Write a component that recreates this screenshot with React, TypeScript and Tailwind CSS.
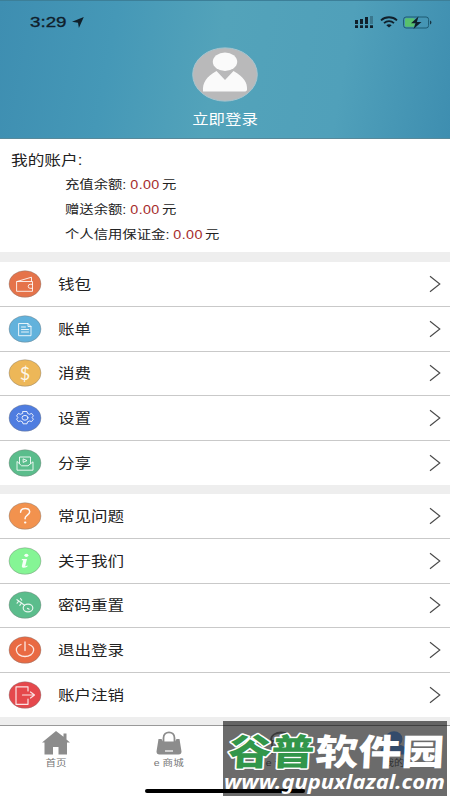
import React from 'react'

const ICON = {
  fill: 'none',
  stroke: 'white',
  strokeWidth: 1,
  strokeOpacity: 0.85,
  strokeLinejoin: 'round' as const,
  strokeLinecap: 'round' as const,
}

// Every icon is drawn on a 34x28 oval badge
const icons: Record<string, React.ReactNode> = {
  wallet: (
    <g {...ICON}>
      <path d="M9 11.500h15.500v9.800H9zM9 11.500l14.500-4.300v4M24.500 14.300h-2.300a2 2 0 0 0 0 4h2.300" />
    </g>
  ),
  bill: (
    <g {...ICON}>
      <path d="M11 8.500h9l3 3v9.200H11zM20 8.500v3h3M13.500 12h4M13.500 14.500h7M13.500 17h7" />
    </g>
  ),
  dollar: (
    <text x="17" y="20.500" textAnchor="middle" fontSize="18" fill="white" fillOpacity="0.9" className="font-['Lato']">$</text>
  ),
  gear: (
    <g {...ICON}>
      <path d="M15 7.500h4l.6 2 2 .8 2-.9 1.800 2.400-1.300 1.700 1.300 1.700-1.800 2.400-2-.6-2 .8-.6 2h-4l-.6-2-2-.8-2 .6-1.800-2.400 1.300-1.700-1.300-1.700 1.800-2.400 2 .9 2-.8z" />
      <ellipse cx="17" cy="13.800" rx="3" ry="2.400" />
    </g>
  ),
  share: (
    <g {...ICON}>
      <path d="M11.500 14.500V8h11v6.500M9 12.800v8.400h16v-8.400l-5 4h-6zM15.500 10l3.500 1.600-3.500 1.600z" />
    </g>
  ),
  question: (
    <g {...ICON} strokeWidth={1.500} strokeOpacity={0.95}>
      <path d="M12.600 10.300c.1-2.500 2-3.900 4.600-3.900 2.700 0 4.500 1.400 4.500 3.400 0 3.200-4.600 3.400-4.600 6.500v.4" />
      <path d="M17 20.400h.4" strokeWidth="2" />
    </g>
  ),
  info: (
    <g fill="white" fillOpacity="0.92">
      <ellipse cx="18.400" cy="8.300" rx="2" ry="1.600" />
      <path d="M14 12h5l-1.800 7.200 2.500-.6-.4 1.200c-2.800 1.600-6 1.400-5.400-1l1.300-5.600H13.600z" />
    </g>
  ),
  key: (
    <g {...ICON} strokeWidth={1.200}>
      <ellipse cx="20" cy="17" rx="4.800" ry="3.900" />
      <path d="M16.500 14.300L9 8.700M10.800 10l-1.700 2.200M13.600 12l-1.800 2.300M12.500 7.500l1.200 1.700" />
      <path d="M19.500 17.400l1.600.8" />
    </g>
  ),
  power: (
    <g {...ICON} strokeWidth={1.300}>
      <path d="M17 6v8.500M13 8.500c-3.500 1.300-5 3.500-4.600 6 .5 3.600 4.200 6 8.600 6s8.100-2.400 8.600-6c.4-2.500-1.100-4.700-4.600-6" />
    </g>
  ),
  logout: (
    <g {...ICON} strokeWidth={1.200}>
      <path d="M20 10V5.800H8v17.500h12V18M14.500 14h11.500M22.500 11l4 3-4 3" />
    </g>
  ),
}

type Item = { icon: string; label: string; color: string }

const accountItems: Item[] = [
  { icon: 'wallet', label: '钱包', color: '#e5734a' },
  { icon: 'bill', label: '账单', color: '#62b2dc' },
  { icon: 'dollar', label: '消费', color: '#edb758' },
  { icon: 'gear', label: '设置', color: '#4f7de0' },
  { icon: 'share', label: '分享', color: '#5bbd8c' },
]

const helpItems: Item[] = [
  { icon: 'question', label: '常见问题', color: '#f2924e' },
  { icon: 'info', label: '关于我们', color: '#85f595' },
  { icon: 'key', label: '密码重置', color: '#5bbd8c' },
  { icon: 'power', label: '退出登录', color: '#e96a43' },
  { icon: 'logout', label: '账户注销', color: '#e5484c' },
]

const balances = [
  { label: '充值余额:', value: '0.00' },
  { label: '赠送余额:', value: '0.00' },
  { label: '个人信用保证金:', value: '0.00' },
]

function MenuGroup({ items }: { items: Item[] }) {
  return (
    <ul className="h-[223px] bg-white flex flex-col">
      {items.map((item, i) => (
        <li
          key={item.label}
          className={`flex-1 flex items-center pl-2 pr-[9px] ${i < items.length - 1 ? 'border-b border-[#c9c9c9]' : ''}`}
        >
          <svg width="34" height="28" viewBox="0 0 34 28" className="shrink-0">
            <ellipse cx="17" cy="14" rx="16" ry="13.300" fill={item.color} stroke="#77777790" strokeWidth="0.700" />
            {icons[item.icon]}
          </svg>
          <span className="ml-[15.500px] text-[14px] leading-5 text-[#222] inline-block origin-left scale-x-[1.18] whitespace-nowrap">
            {item.label}
          </span>
          <svg width="12" height="18" viewBox="0 0 12 18" className="ml-auto shrink-0">
            <path d="M1 1.200L10.800 9 1 16.800" fill="none" stroke="#4a4a4a" strokeWidth="1.150" />
          </svg>
        </li>
      ))}
    </ul>
  )
}

function StatusBar() {
  return (
    <div className="h-[42px] pl-[30px] pr-[18px] flex items-center text-[#10202b]">
      <span className="font-['Liberation_Sans'] text-[14px] leading-4 w-[42px] [-webkit-text-stroke:0.3px]">
        <span className="inline-block origin-left scale-x-[1.34]">3:29</span>
      </span>
      <svg width="12" height="11" viewBox="0 0 12 11">
        <path d="M11.800 0L0 4.800l6 .9.900 5.300z" fill="currentColor" />
      </svg>
      <div className="ml-auto flex items-center">
        <svg width="20" height="12" viewBox="0 0 20 12" fill="currentColor">
          <path d="M1 4h3v4H1zM6 3h3v5H6zM11 1h3v7h-3zM1 9.200h3V12H1zM6 9.200h3V12H6zM11 9.200h3V12h-3zM16 9.200h3V12h-3z" />
          <path d="M16 0h3v8h-3z" fillOpacity="0.3" />
        </svg>
        <svg width="18" height="12" viewBox="0 0 18 12" className="ml-1.5" fill="none" stroke="currentColor" strokeWidth="1.800">
          <path d="M1 4.300C5.500.2 12.500.2 17 4.300M4 7.100c2.900-2.600 7.100-2.600 10 0" />
          <path d="M6.300 9.200L9 11.500l2.700-2.300c-1.500-1.300-3.900-1.300-5.400 0z" fill="currentColor" stroke="none" />
        </svg>
        <svg width="29" height="13" viewBox="0 0 29 13" className="ml-[5px]">
          <rect x="0.600" y="1" width="25" height="11" rx="2.500" fill="none" stroke="#1d5a72" />
          <rect x="2" y="2.300" width="9.500" height="8.400" rx="1" fill="#58c16d" />
          <path d="M15.500.5L8 7.200h4.500L10.500 13l8-7h-4.600z" fill="currentColor" />
          <path d="M27.200 4.500c1.600.6 1.600 3.400 0 4z" fill="currentColor" />
        </svg>
      </div>
    </div>
  )
}

function Header() {
  return (
    <header className="h-[139px] border-t border-t-[#3c7f98] border-b border-b-[#58899a] bg-[linear-gradient(100deg,#3e8eb1_0%,#4598b7_25%,#53a3ba_48%,#50a0ba_75%,#3e8eb0_100%)]">
      <StatusBar />
      <div className="flex flex-col items-center">
        <svg width="66" height="55" viewBox="0 0 66 55" className="mt-[4px]">
          <ellipse cx="33" cy="27.500" rx="32.300" ry="26.600" fill="#b9b9ba" stroke="#a9c5cf" />
          <path d="M11 44.500c-.5-9 3-14.500 13.500-20.500L33 33 41.500 24C52 30 55.500 35.500 55 42.500c0 1.500-1 2-3 2z" fill="#fafafa" />
          <ellipse cx="33" cy="14.800" rx="12.200" ry="9.200" fill="#fafafa" />
        </svg>
        <span className="mt-[7px] text-[14px] leading-5 text-white scale-x-[1.17]">立即登录</span>
      </div>
    </header>
  )
}

function TabBar() {
  return (
    <nav className="mt-[8px] h-[75px] border-t border-[#999] bg-white grid grid-cols-4 text-[#777] text-[9px] leading-3">
      <div className="flex flex-col items-center pt-[5px]">
        <svg width="28" height="24" viewBox="0 0 28 24" fill="#8c8c8c">
          <path d="M14 0L0 11.500h2.500V23.500H11v-7.500h5.500v7.500H25V11.500h3l-3.500-3V2.500h-3v3.300z" />
        </svg>
        <span className="mt-[2px] scale-x-[1.17]">首页</span>
      </div>
      <div className="flex flex-col items-center pt-[5px]">
        <svg width="26" height="24" viewBox="0 0 26 24">
          <path d="M7.500 11V7C7.500-.5 18.500-.5 18.500 7v4" fill="none" stroke="#8c8c8c" strokeWidth="1.800" />
          <path d="M2.500 8h3l1.500 2.500h12L20.500 8h3l2 12.500c0 2-1 3-3 3h-19c-2 0-3-1-3-3z" fill="#8c8c8c" />
          <path d="M9 20h8" stroke="#fff" strokeWidth="1.200" />
        </svg>
        <span className="mt-[2px] scale-x-[1.17]">e 商城</span>
      </div>
      <div className="flex flex-col items-center pt-[5px]">
        <svg width="26" height="24" viewBox="0 0 26 24" fill="none" stroke="#8c8c8c" strokeWidth="1.800">
          <path d="M3 9c0-10 20-10 20 0M4 10h18v12H4z" />
        </svg>
        <span className="mt-[2px] scale-x-[1.17]">e 订单</span>
      </div>
      <div className="flex flex-col items-center pt-[5px]">
        <svg width="28" height="24" viewBox="0 0 28 24" fill="#79b2ff">
          <ellipse cx="14" cy="8" rx="8.500" ry="7.800" />
          <path d="M0 23.500c0-6 4-9 9-10h10c5 1 9 4 9 10z" />
        </svg>
        <span className="mt-[2px] scale-x-[1.17]">我的</span>
      </div>
    </nav>
  )
}

function Watermark() {
  return (
    <div className="absolute left-[223px] top-[721px] w-[224px] h-[75px] bg-black/58">
      <svg width="224" height="75" viewBox="0 0 224 75">
        <g fontSize="36" fontWeight="900" strokeLinejoin="round" paintOrder="stroke" transform="skewX(-3)">
          <text x="7" y="44" textLength="86" lengthAdjust="spacingAndGlyphs" fill="#32964a" stroke="white" strokeWidth="3">谷普</text>
          <text x="94" y="44" textLength="129" lengthAdjust="spacingAndGlyphs" fill="white">软件园</text>
        </g>
        <text
          x="1"
          y="68"
          fontSize="20"
          fontWeight="700"
          fontStyle="italic"
          textLength="221"
          lengthAdjust="spacingAndGlyphs"
          fill="white"
          className="font-['Noto_Sans']"
        >
          www.gupuxlazal.com
        </text>
      </svg>
    </div>
  )
}

export default function App() {
  return (
    <div className="relative w-[450px] h-[800px] overflow-hidden bg-[#eeeeee] flex flex-col font-['Liberation_Sans','Noto_Sans_CJK_SC',sans-serif]">
      <Header />

      <section className="h-[113px] bg-white pt-[9px] text-[#222]">
        <h1 className="ml-[11px] text-[14px] leading-5 inline-block origin-left scale-x-[1.19]">我的账户:</h1>
        <div className="ml-[65px] mt-[1px]">
          {balances.map((b) => (
            <p key={b.label} className="h-[25px] w-max text-[12px] leading-[25px] origin-left scale-x-[1.195] whitespace-nowrap">
              {b.label} <span className="text-[#a52b2b] tracking-[0.3px]">{b.value}</span>
              <span className="ml-0.5">元</span>
            </p>
          ))}
        </div>
      </section>

      <div className="mt-[10px]">
        <MenuGroup items={accountItems} />
      </div>
      <div className="mt-[9px]">
        <MenuGroup items={helpItems} />
      </div>

      <TabBar />

      {/* home indicator */}
      <div className="absolute left-[145px] top-[789px] w-[160px] h-1 rounded-full bg-black" />
      <Watermark />
    </div>
  )
}
